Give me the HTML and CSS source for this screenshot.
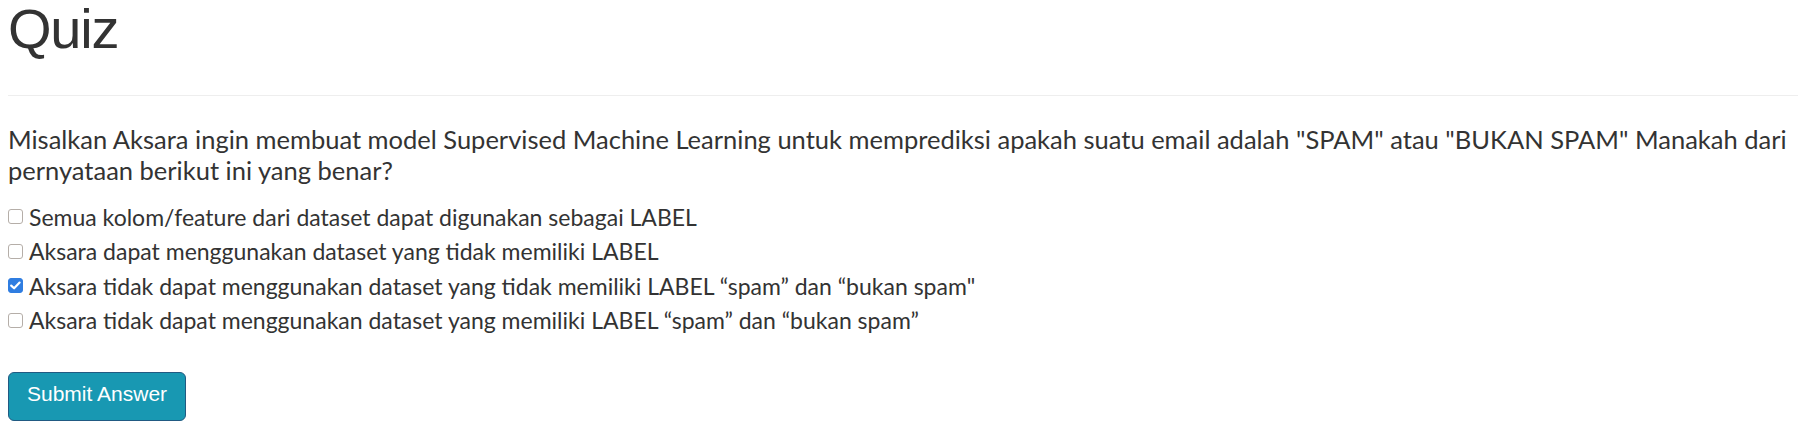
FILE: index.html
```html
<!DOCTYPE html>
<html lang="id">
<head>
<meta charset="utf-8">
<title>Quiz</title>
<link rel="stylesheet" href="styles.css">
</head>
<body>
<div class="container">
  <h1 class="title">Quiz</h1>
  <hr class="divider">
  <p class="question">Misalkan Aksara ingin membuat model Supervised Machine Learning untuk memprediksi apakah suatu email adalah "SPAM" atau "BUKAN SPAM" Manakah dari pernyataan berikut ini yang benar?</p>
  <form class="options">
    <label class="option"><input type="checkbox" class="check"><span>Semua kolom/feature dari dataset dapat digunakan sebagai LABEL</span></label>
    <label class="option"><input type="checkbox" class="check"><span>Aksara dapat menggunakan dataset yang tidak memiliki LABEL</span></label>
    <label class="option"><input type="checkbox" class="check" checked><span>Aksara tidak dapat menggunakan dataset yang tidak memiliki LABEL “spam” dan “bukan spam"</span></label>
    <label class="option"><input type="checkbox" class="check"><span>Aksara tidak dapat menggunakan dataset yang memiliki LABEL “spam” dan “bukan spam”</span></label>
    <div class="actions"><button type="button" class="btn-submit">Submit Answer</button></div>
  </form>
</div>
</body>
</html>
```
FILE: styles.css
```css
html, body {
  margin: 0;
  padding: 0;
  background: #fff;
}
.container {
  padding: 0 8px;
  color: #333;
}
.title {
  font-family: "Liberation Sans", Arial, sans-serif;
  font-weight: 400;
  font-size: 56px;
  line-height: 64px;
  letter-spacing: -1.2px;
  margin: -3px 0 0;
  color: #333;
}
.divider {
  margin: 34px 0 0;
  border: 0;
  border-top: 1px solid #eee;
  height: 0;
}
.question {
  font-family: Lato, "Noto Sans", sans-serif;
  font-size: 25.5px;
  line-height: 30.8px;
  margin: 28px 0 0;
  color: #333;
}
.options {
  margin: 14px 0 0;
  font-family: Lato, "Noto Sans", sans-serif;
  font-size: 23px;
}
.option {
  display: flex;
  align-items: center;
  height: 34.5px;
  line-height: 34.5px;
  color: #333;
}
.check {
  -webkit-appearance: none;
  appearance: none;
  box-sizing: border-box;
  width: 15px;
  height: 15px;
  margin: 0 6px 0 0;
  flex: none;
  border: 1px solid #b5aea8;
  border-radius: 3px;
  background: #fff;
}
.check:checked {
  border-color: #2f7de1;
  background: #2f7de1 url("data:image/svg+xml;utf8,<svg xmlns='http://www.w3.org/2000/svg' viewBox='0 0 15 15'><path d='M3.2 7.6 L6.1 10.3 L11.6 4.6' fill='none' stroke='white' stroke-width='2.2' stroke-linecap='round' stroke-linejoin='round'/></svg>") center / 15px 15px no-repeat;
}
.actions {
  margin-top: 34px;
}
.btn-submit {
  font-family: "Liberation Sans", Arial, sans-serif;
  font-size: 21px;
  line-height: 25px;
  color: #fff;
  background: #1898b2;
  border: 1px solid #215a82;
  border-radius: 6px;
  padding: 8px 18px 14px;
  cursor: pointer;
}
```
